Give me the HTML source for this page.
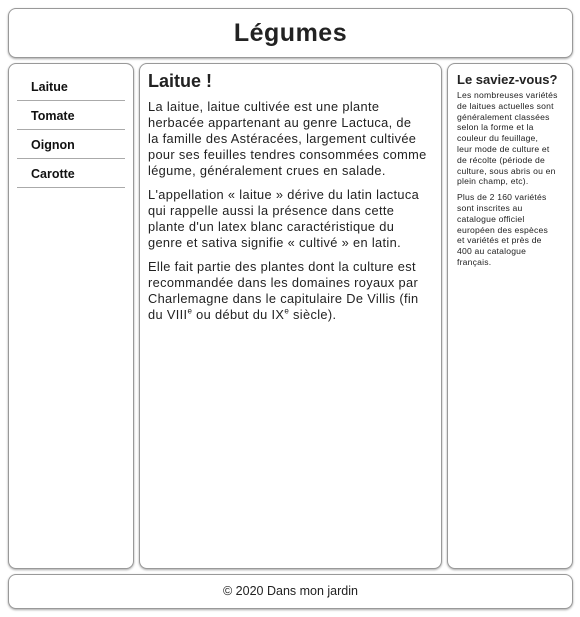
<!DOCTYPE html>
<html><head><meta charset="utf-8"><style>
body{margin:0;width:580px;height:617px;background:#fff;font-family:"Liberation Sans",sans-serif;color:#222;position:relative;overflow:hidden}
.b{position:absolute;border:1px solid #999;border-radius:8px;box-shadow:0 1px 2px rgba(0,0,0,.35);background:#fff;box-sizing:border-box}
h1{margin:0;font-size:25px;text-align:center;line-height:48px;letter-spacing:.5px}
.nav a{display:block;font-weight:bold;font-size:12.5px;color:#111;margin:0 8px;padding:8px 0 6px 14px;border-bottom:1px solid #aaa;line-height:14px}
.m h2{font-size:18px;margin:7px 0 8px 8px;line-height:20px}
.m p{font-size:12.8px;letter-spacing:.35px;line-height:16px;margin:0 0 8px 8px;color:#222;white-space:nowrap}
.a h3{font-size:13px;margin:8px 0 3px 9px;line-height:15px}
.a p{font-size:8.6px;letter-spacing:.2px;line-height:10.8px;margin:0 0 5px 9px;color:#222;white-space:nowrap}
sup{font-size:8px;line-height:0}
</style></head><body>
<div class="b" style="left:8px;top:8px;width:565px;height:50px"><h1>Légumes</h1></div>
<div class="b nav" style="left:8px;top:63px;width:126px;height:506px;padding-top:8px">
<a>Laitue</a><a>Tomate</a><a>Oignon</a><a>Carotte</a></div>
<div class="b m" style="left:139px;top:63px;width:303px;height:506px">
<h2>Laitue !</h2>
<p>La laitue, laitue cultivée est une plante<br>herbacée appartenant au genre Lactuca, de<br>la famille des Astéracées, largement cultivée<br>pour ses feuilles tendres consommées comme<br>légume, généralement crues en salade.</p>
<p>L'appellation « laitue » dérive du latin lactuca<br>qui rappelle aussi la présence dans cette<br>plante d'un latex blanc caractéristique du<br>genre et sativa signifie « cultivé » en latin.</p>
<p>Elle fait partie des plantes dont la culture est<br>recommandée dans les domaines royaux par<br>Charlemagne dans le capitulaire De Villis (fin<br>du VIII<sup>e</sup> ou début du IX<sup>e</sup> siècle).</p>
</div>
<div class="b a" style="left:447px;top:63px;width:126px;height:506px">
<h3>Le saviez-vous?</h3>
<p>Les nombreuses variétés<br>de laitues actuelles sont<br>généralement classées<br>selon la forme et la<br>couleur du feuillage,<br>leur mode de culture et<br>de récolte (période de<br>culture, sous abris ou en<br>plein champ, etc).</p>
<p>Plus de 2 160 variétés<br>sont inscrites au<br>catalogue officiel<br>européen des espèces<br>et variétés et près de<br>400 au catalogue<br>français.</p>
</div>
<div class="b" style="left:8px;top:574px;width:565px;height:35px;text-align:center;font-size:12.5px;line-height:33px">© 2020 Dans mon jardin</div>
</body></html>
